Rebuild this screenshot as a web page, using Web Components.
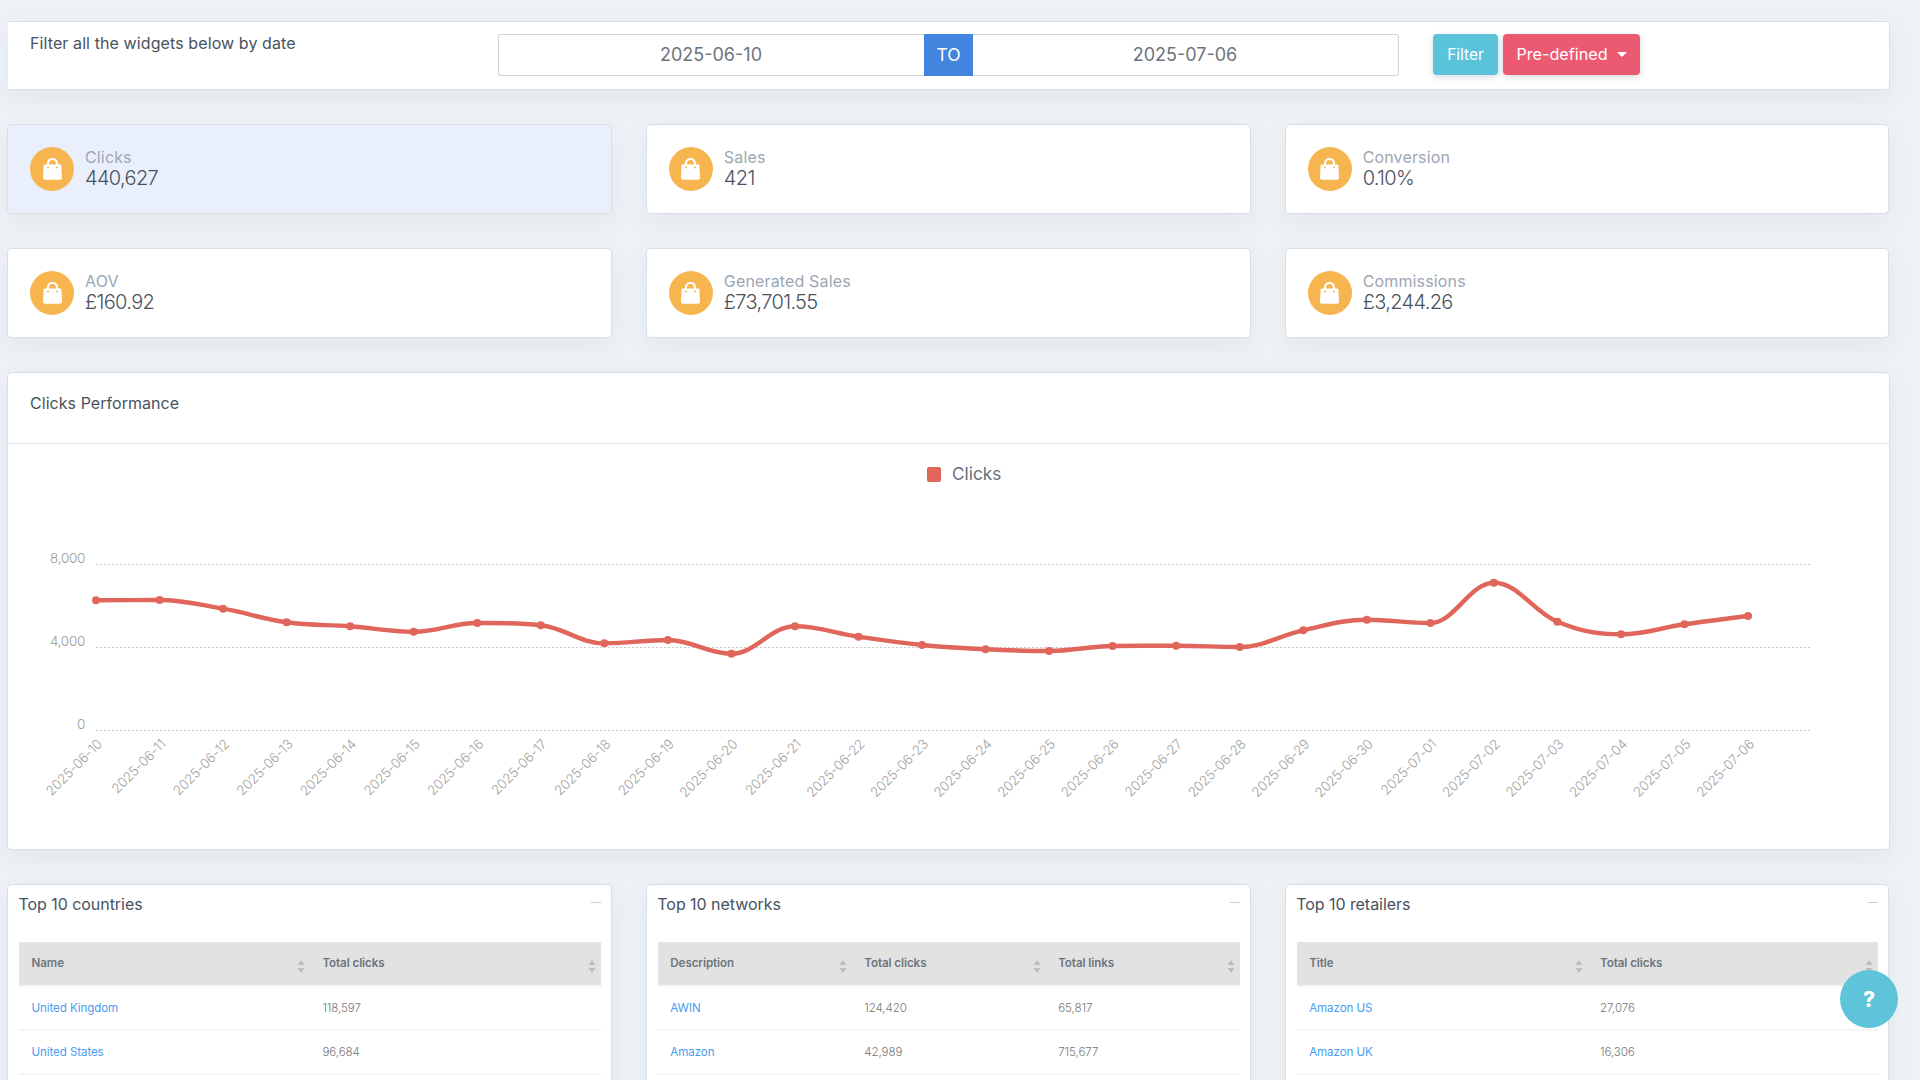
<!DOCTYPE html>
<html lang="en">
<head>
<meta charset="utf-8">
<title>Dashboard</title>
<style>
  html,body{margin:0;padding:0;height:1080px;overflow:hidden;background:#eef2f6;font-family:Inter,"Liberation Sans",sans-serif;}
</style>
</head>
<body>
<dash-page>
  <filter-bar from="2025-06-10" to="2025-07-06">Filter all the widgets below by date</filter-bar>
  <stat-grid>
    <stat-card active><span slot="label">Clicks</span>440,627</stat-card>
    <stat-card><span slot="label">Sales</span>421</stat-card>
    <stat-card><span slot="label">Conversion</span>0.10%</stat-card>
    <stat-card><span slot="label">AOV</span>£160.92</stat-card>
    <stat-card><span slot="label">Generated Sales</span>£73,701.55</stat-card>
    <stat-card><span slot="label">Commissions</span>£3,244.26</stat-card>
  </stat-grid>
  <chart-card>Clicks Performance</chart-card>
  <stat-grid>
    <table-card columns="Name|Total clicks" rows="United Kingdom|118,597;United States|96,684">Top 10 countries</table-card>
    <table-card columns="Description|Total clicks|Total links" rows="AWIN|124,420|65,817;Amazon|42,989|715,677">Top 10 networks</table-card>
    <table-card columns="Title|Total clicks" rows="Amazon US|27,076;Amazon UK|16,306">Top 10 retailers</table-card>
  </stat-grid>
</dash-page>
<help-button></help-button>
<script>
const def=(name,css,html,init)=>customElements.define(name,class extends HTMLElement{
  constructor(){super();this.attachShadow({mode:'open'});}
  connectedCallback(){
    this.shadowRoot.innerHTML=`<style>${css}</style>${typeof html==='function'?html(this):html}`;
    if(init)init(this);
  }
});
const CARD=`background:#fff;border:1px solid #d9dfe5;border-radius:4px;box-shadow:0 8px 24px rgba(80,100,120,.08);box-sizing:border-box;`;

def('dash-page',`:host{display:flex;flex-direction:column;gap:34px;padding:21px 30.5px 0 7px;box-sizing:border-box;width:1920px;height:1080px;overflow:hidden;color:#47525e;}::slotted(*){flex:none}`,`<slot></slot>`);

def('stat-grid',`:host{display:grid;grid-template-columns:repeat(3,1fr);gap:34px 34px;}`,`<slot></slot>`);

def('filter-bar',`
  :host{display:flex;align-items:flex-start;height:69px;${CARD}border-left:none;border-radius:0 4px 4px 0;padding:12px 0 0 22px;margin-left:1px;}
  .lbl{flex:0 0 468px;font-size:16px;line-height:20px;letter-spacing:.1px;color:#47525e;margin-top:-1.5px}
  .grp{flex:0 0 901px;display:flex;height:42px;box-sizing:border-box;}
  .in{flex:1;border:1px solid #ced4da;display:flex;align-items:center;justify-content:center;font-size:18px;letter-spacing:0;color:#6c757d;padding:0 1px 1px 0;box-sizing:border-box}
  .in.a{border-radius:3px 0 0 3px;border-right:none}
  .in.b{border-radius:0 3px 3px 0;border-left:none}
  .to{flex:0 0 49px;background:#4285de;color:#fff;display:flex;align-items:center;justify-content:center;font-size:17.5px;padding-bottom:1px;box-sizing:border-box}
  .btn{height:41px;border-radius:4px;color:#fff;display:flex;align-items:center;justify-content:center;font-size:15.5px;box-shadow:0 2px 6px rgba(90,110,130,.25);box-sizing:border-box;padding-bottom:1px}
  .f{margin-left:34px;width:65px;background:#5cc4da}
  .p{margin-left:5px;width:137px;background:#ec5a72;gap:9px;font-size:16.2px}
  .car{width:0;height:0;border-left:5px solid transparent;border-right:5px solid transparent;border-top:5px solid #fff;}
`,h=>`<div class="lbl"><slot></slot></div>
  <div class="grp"><div class="in a">${h.getAttribute('from')}</div><div class="to">TO</div><div class="in b">${h.getAttribute('to')}</div></div>
  <div class="btn f">Filter</div><div class="btn p">Pre-defined<span class="car"></span></div>`);

def('bag-icon',`:host{display:flex;align-items:center;justify-content:center;flex:0 0 44px;width:44px;height:44px;border-radius:50%;background:#f6b54e;}svg{display:block}`,
  `<svg width="19" height="22" viewBox="0 0 19 22"><path d="M5 8V5.5a4.5 4.5 0 0 1 9 0V8" fill="none" stroke="#fff" stroke-width="2.2"/><path d="M1.6 6.4h15.8a1 1 0 0 1 1 .9l.6 12.4a2 2 0 0 1-2 2.1H2a2 2 0 0 1-2-2.1L.6 7.3a1 1 0 0 1 1-.9z" fill="#fff"/><circle cx="5" cy="9.6" r="1" fill="#f6b54e"/><circle cx="14" cy="9.6" r="1" fill="#f6b54e"/></svg>`);

def('stat-card',`
  :host{display:flex;align-items:center;gap:11px;height:90px;padding:0 22px;${CARD}}
  :host([active]){background:#e9f0fc;}
  .t{padding-bottom:3px}
  .l{font-size:16px;line-height:20.5px;color:#9aa6b2;letter-spacing:.15px}
  .v{font-size:20px;line-height:20.5px;color:#47525e;font-weight:300;letter-spacing:-.65px}
`,`<bag-icon></bag-icon><div class="t"><div class="l"><slot name="label"></slot></div><div class="v"><slot></slot></div></div>`);

def('chart-card',`
  :host{display:block;height:478px;${CARD}}
  .h{height:71px;border-bottom:1px solid #e5e7ea;padding:20px 22px 0;box-sizing:border-box;font-size:16px;line-height:20px;letter-spacing:.05px;color:#47525e}
  svg{display:block}
  text{font-family:Inter,"Liberation Sans",sans-serif}
`,`<div class="h"><slot></slot></div><svg id="c" width="1880" height="405" viewBox="8 444 1880 405" xmlns="http://www.w3.org/2000/svg"></svg>`,
h=>{
  const ys=[600.3,600,608.7,622.3,626.3,631.7,623,625.3,643.3,640,653.7,626.3,636.7,645,649.3,651,646,645.7,647,630.3,619.7,623,582.7,621.7,634.3,624.3,616];
  const x0=96,dx=63.54,xs=ys.map((_,i)=>x0+i*dx);
  const labels=[];
  for(let i=0;i<27;i++){const d=new Date(Date.UTC(2025,5,10+i));labels.push(d.toISOString().slice(0,10));}
  const sl=ys.slice(1).map((y,i)=>(y-ys[i])/dx);
  const m=ys.map((_,i)=>{
    if(i===0)return sl[0];
    if(i===26)return sl[25];
    const a=sl[i-1],b=sl[i];
    if(a*b<=0)return 0;
    return Math.sign(a)*Math.min(Math.abs(a)*3,Math.abs(b)*3,(Math.abs(a)+Math.abs(b))/2);
  });
  let d=`M${xs[0]} ${ys[0]}`;
  for(let i=0;i<26;i++){
    d+=`C${(xs[i]+dx/2.6).toFixed(1)} ${(ys[i]+m[i]*dx/2.6).toFixed(1)} ${(xs[i+1]-dx/2.6).toFixed(1)} ${(ys[i+1]-m[i+1]*dx/2.6).toFixed(1)} ${xs[i+1].toFixed(1)} ${ys[i+1]}`;
  }
  let s='';
  s+=`<rect x="927" y="467" width="14" height="15" rx="2" fill="#e0655a"/><text x="952" y="480" font-size="17.2" fill="#666f7a">Clicks</text>`;
  [[564.5,'8,000'],[647.5,'4,000'],[730.5,'0']].forEach(([y,t])=>{
    s+=`<line x1="96" x2="1810" y1="${y}" y2="${y}" stroke="#c9c9c9" stroke-width="1" stroke-dasharray="2 2"/>`;
    s+=`<text x="85" y="${y-2}" font-size="13.5" fill="#999" font-weight="300" text-anchor="end" letter-spacing="-.3">${t}</text>`;
  });
  s+=`<path d="${d}" fill="none" stroke="#e0655a" stroke-width="4.4"/>`;
  xs.forEach((x,i)=>{s+=`<circle cx="${x}" cy="${ys[i]}" r="4" fill="#e0655a"/>`;});
  labels.forEach((t,i)=>{const x=xs[i]+7,y=745;s+=`<text x="${x}" y="${y}" font-size="13.4" fill="#a3a3a3" font-weight="300" text-anchor="end" transform="rotate(-45 ${x} ${y})" letter-spacing="-.2">${t}</text>`;});
  h.shadowRoot.getElementById('c').innerHTML=s;
});

def('table-card',`
  :host{display:block;height:260px;${CARD}padding:7px 10px 0 11px;overflow:hidden;}
  .h{display:flex;justify-content:space-between;align-items:center;height:24px;margin:0 0 26px -.5px;font-size:16px;letter-spacing:-.05px;color:#47525e}
  .m{width:10px;height:1.5px;background:#cfcfcf;margin-top:-3px}
  table{width:100%;table-layout:fixed;border-collapse:separate;border-spacing:0;font-size:11.6px;}
  th{height:43px;background:#e2e2e2;color:#6c757d;font-weight:600;text-align:left;padding:0 0 1px 12.5px;box-sizing:border-box;position:relative;border-bottom:0;letter-spacing:-.08px}
  td{height:44px;border-bottom:2px solid #f5f6f7;padding:0 0 0 12.5px;box-sizing:border-box;color:#777;font-weight:300;letter-spacing:-.1px;}
  tbody tr:first-child td{height:46px;border-top:2px solid #f5f6f7}
  td.k{color:#4a9cf0;font-weight:400}
  .s{position:absolute;right:5px;top:18px;width:8px;height:13px;display:block}
`,h=>{
  const cols=h.getAttribute('columns').split('|');
  const rows=h.getAttribute('rows').split(';').map(r=>r.split('|'));
  const sort=`<svg class="s" viewBox="0 0 8 13"><path d="M4 0l3.5 5h-7z M4 13l3.5-5h-7z" fill="#bdbdbd"/></svg>`;
  return `<div class="h"><span><slot></slot></span><span class="m"></span></div>
  <table><thead><tr>${cols.map(c=>`<th>${c}${sort}</th>`).join('')}</tr></thead>
  <tbody>${rows.map(r=>`<tr>${r.map((c,i)=>`<td class="${i?'':'k'}">${c}</td>`).join('')}</tr>`).join('')}</tbody></table>`;
});

def('help-button',`
  :host{position:fixed;left:1840px;top:970px;width:58px;height:58px;border-radius:50%;background:#5ec4d9;color:#fff;display:flex;align-items:center;justify-content:center;font:800 21px Inter,"Liberation Sans",sans-serif;}
`,`?`);
</script>
</body>
</html>
